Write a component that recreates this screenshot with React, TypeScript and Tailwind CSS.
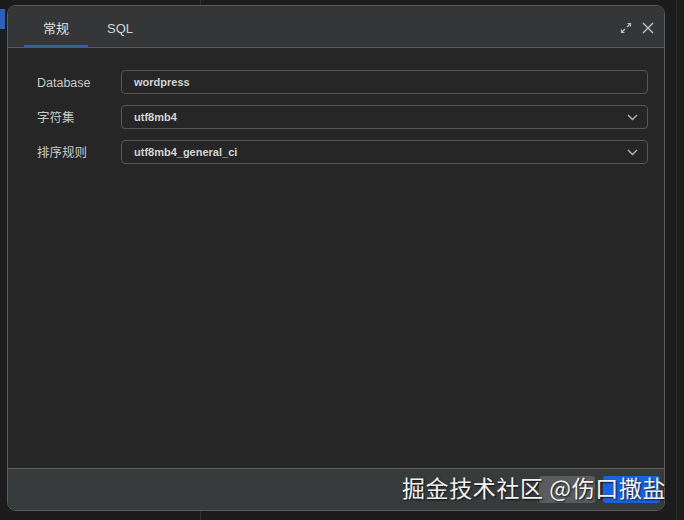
import React from 'react';

const rows = [
  { label: 'Database', value: 'wordpress', select: false },
  { label: '字符集', value: 'utf8mb4', select: true },
  { label: '排序规则', value: 'utf8mb4_general_ci', select: true },
];

function ExpandIcon() {
  return (
    <svg width="12" height="12" viewBox="0 0 12 12" fill="none" stroke="#bfbfbf" strokeWidth="1.2">
      <path d="M7 5 L10.5 1.5" />
      <path d="M7.5 1.5 H10.5 V4.5" />
      <path d="M5 7 L1.5 10.5" />
      <path d="M1.5 7.5 V10.5 H4.5" />
    </svg>
  );
}

function CloseIcon() {
  return (
    <svg width="12" height="12" viewBox="0 0 12 12" fill="none" stroke="#c4c4c4" strokeWidth="1.3">
      <path d="M1 1 L11 11 M11 1 L1 11" />
    </svg>
  );
}

function Chevron() {
  return (
    <svg width="11" height="7" viewBox="0 0 11 7" fill="none" stroke="#b5b5b5" strokeWidth="1.4">
      <path d="M1 1 L5.5 5.5 L10 1" />
    </svg>
  );
}

export default function App() {
  return (
    <div
      className="relative w-[684px] h-[520px] bg-[#1c1c1c] overflow-hidden"
      style={{ fontFamily: '"Liberation Sans", "Noto Sans CJK SC", sans-serif' }}
    >
      {/* page behind the modal */}
      <div className="absolute left-0 top-[9px] w-[5px] h-[20px] bg-[#2f5fb8]" />
      <div className="absolute left-[200px] top-0 w-px h-full bg-[#333]" />
      <div className="absolute left-[676px] top-0 w-px h-full bg-[#2c2c2c]" />

      {/* dialog */}
      <div className="absolute left-[7px] top-[5px] w-[658px] h-[506px] flex flex-col rounded-[9px] border border-[#5c5c5c] overflow-hidden">
        <div className="h-[42px] shrink-0 flex bg-[#343637] border-b border-[#5a5a5a]">
          <div className="flex pl-[16px]">
            <div className="relative w-[64px] flex items-center justify-center pt-[4px] text-[13px] text-[#e2e2e2]">
              常规
              <div className="absolute left-0 right-0 bottom-[-1px] h-[3px] bg-[#3a5ea8]" />
            </div>
            <div className="w-[64px] flex items-center justify-center pt-[4px] text-[13px] text-[#d6d6d6]">SQL</div>
          </div>
          <div className="ml-auto flex items-center gap-[10px] pr-[10px] pt-[3px]">
            <ExpandIcon />
            <CloseIcon />
          </div>
        </div>

        <div className="flex-1 bg-[#262626] pt-[22px] pl-[29px] pr-[16px] flex flex-col gap-[11px]">
          {rows.map((r) => (
            <div key={r.label} className="flex items-center h-[24px]">
              <div className="w-[84px] shrink-0 pt-[2px] text-[12.5px] text-[#c9c9c9]">{r.label}</div>
              <div className="flex-1 h-[24px] flex items-center rounded-[4px] border border-[#575757] pl-[12px] pr-[9px] text-[11px] font-semibold text-[#d4d4d4]">
                <span>{r.value}</span>
                {r.select && (
                  <span className="ml-auto flex items-center">
                    <Chevron />
                  </span>
                )}
              </div>
            </div>
          ))}
        </div>

        <div className="h-[42px] shrink-0 bg-[#383b3c] border-t border-[#5e5e5e] flex items-center justify-end gap-[8px] pr-[4px]">
          <div className="w-[56px] h-[27px] rounded-[3px] bg-[#5a5c5d]" />
          <div className="w-[57px] h-[27px] rounded-[3px] bg-[#1a62e0]" />
        </div>
      </div>

      {/* watermark */}
      <div
        className="absolute left-[402px] top-[472px] text-[23px] leading-[30px] tracking-[0.6px] text-[#f2f2f2] whitespace-nowrap"
        style={{ fontFamily: '"Noto Sans CJK SC", sans-serif', textShadow: '1px 1px 2px rgba(0,0,0,0.8)' }}
      >
        掘金技术社区 @伤口撒盐
      </div>
    </div>
  );
}
